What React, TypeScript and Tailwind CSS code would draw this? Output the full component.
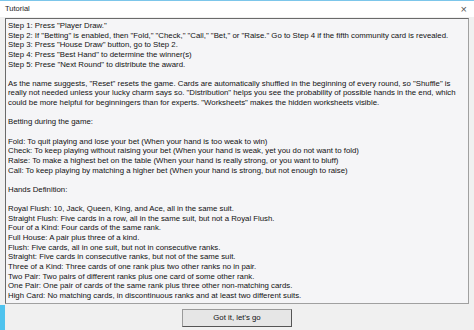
import React from 'react';

const lines: string[] = [
  'Step 1: Press "Player Draw."',
  'Step 2: If "Betting" is enabled, then "Fold," "Check," "Call," "Bet," or "Raise." Go to Step 4 if the fifth community card is revealed.',
  'Step 3: Press "House Draw" button, go to Step 2.',
  'Step 4: Press "Best Hand" to determine the winner(s)',
  'Step 5: Prese "Next Round" to distribute the award.',
  '',
  'As the name suggests, "Reset" resets the game. Cards are automatically shuffled in the beginning of every round, so "Shuffle" is',
  'really not needed unless your lucky charm says so. "Distribution" helps you see the probability of possible hands in the end, which',
  'could be more helpful for beginningers than for experts. "Worksheets" makes the hidden worksheets visible.',
  '',
  'Betting during the game:',
  '',
  'Fold: To quit playing and lose your bet (When your hand is too weak to win)',
  'Check: To keep playing without raising your bet (When your hand is weak, yet you do not want to fold)',
  'Raise: To make a highest bet on the table (When your hand is really strong, or you want to bluff)',
  'Call: To keep playing by matching a higher bet (When your hand is strong, but not enough to raise)',
  '',
  'Hands Definition:',
  '',
  'Royal Flush: 10, Jack, Queen, King, and Ace, all in the same suit.',
  'Straight Flush: Five cards in a row, all in the same suit, but not a Royal Flush.',
  'Four of a Kind: Four cards of the same rank.',
  'Full House: A pair plus three of a kind.',
  'Flush: Five cards, all in one suit, but not in consecutive ranks.',
  'Straight: Five cards in consecutive ranks, but not of the same suit.',
  'Three of a Kind: Three cards of one rank plus two other ranks no in pair.',
  'Two Pair: Two pairs of different ranks plus one card of some other rank.',
  'One Pair: One pair of cards of the same rank plus three other non-matching cards.',
  'High Card: No matching cards, in discontinuous ranks and at least two different suits.',
];

export default function App() {
  return (
    <div
      className="relative w-[474px] h-[330px] bg-[#f0f0f0] border-t border-[#7cc6ea] flex flex-col overflow-hidden"
      style={{ fontFamily: '"Liberation Sans", Arial, sans-serif' }}
    >
      {/* Title bar */}
      <div className="h-[16px] bg-white flex items-center justify-between pl-[5px] pr-[7px]">
        <span className="text-[7.5px] text-[#222]">Tutorial</span>
        <span className="text-[11px] leading-none text-[#555]">×</span>
      </div>

      {/* Text box */}
      <div className="mx-[5px] mt-[1px] h-[286px] bg-[#f5f5f7] border border-[#a0a0a0] border-l-[#6a6a6a] border-t-[#6a6a6a] px-[2px] pt-[2px]">
        {lines.map((l, i) => (
          <div key={i} className="h-[9.65px] leading-[9.65px] text-[7.8px] text-[#111] whitespace-nowrap">
            {l || '\u00a0'}
          </div>
        ))}
      </div>

      {/* Button */}
      <div className="flex justify-center mt-[5px]">
        <button className="w-[110px] h-[18px] bg-[#e6e6e6] border border-[#9a9a9a] border-r-[#555] border-b-[#555] text-[7.8px] text-[#111]">
          Got it, let's go
        </button>
      </div>

      {/* window edge accent */}
      <div className="absolute left-0 bottom-0 w-[5px] h-[25px] bg-[#4fc3ee]" />
    </div>
  );
}
